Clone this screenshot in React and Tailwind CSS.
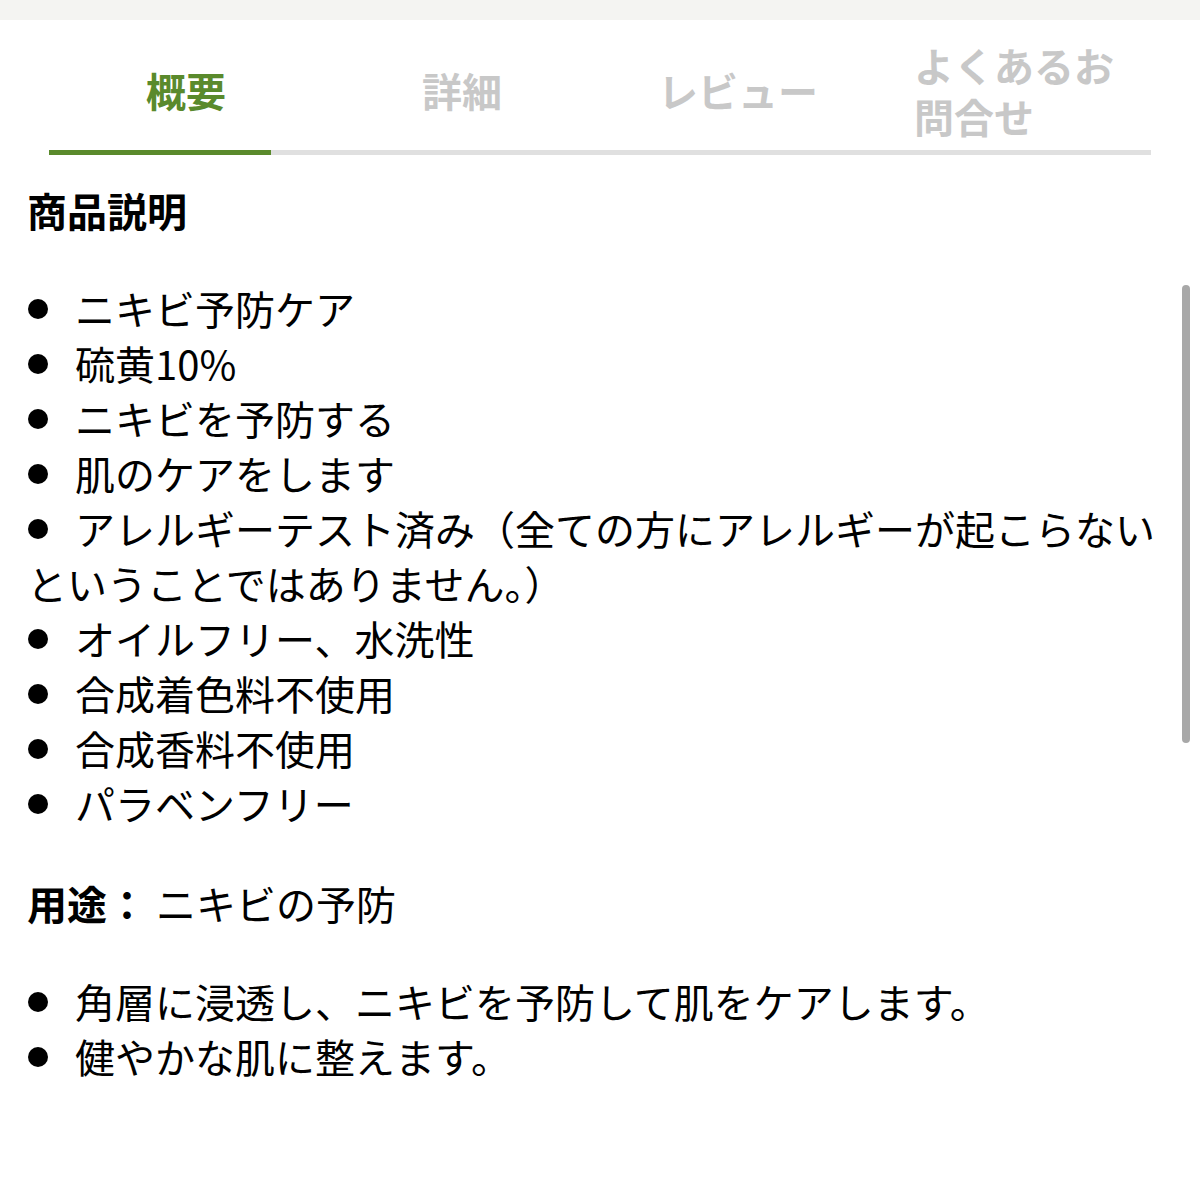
import React from "react";

const tabs = [
  { label: "概要", active: true },
  { label: "詳細" },
  { label: "レビュー" },
  { label: "よくあるお問合せ", wrap: true },
];

const features = [
  "ニキビ予防ケア",
  "硫黄10%",
  "ニキビを予防する",
  "肌のケアをします",
  "アレルギーテスト済み（全ての方にアレルギーが起こらないということではありません。）",
  "オイルフリー、水洗性",
  "合成着色料不使用",
  "合成香料不使用",
  "パラベンフリー",
];

const usage = ["角層に浸透し、ニキビを予防して肌をケアします。", "健やかな肌に整えます。"];

// Bullet + text, kept inline so long items wrap under the bullet
const Item = ({ children }) => (
  <p>
    <span className="inline-block w-[48px]">
      <span className="ml-[1px] inline-block h-[20px] w-[20px] rounded-full bg-black align-[6px]" />
    </span>
    {children}
  </p>
);

const App = () => {
  return (
    <div
      className="relative min-h-[1200px] w-full bg-white text-black"
      style={{ fontFamily: '"Noto Sans CJK JP", "Noto Sans", sans-serif' }}
    >
      {/* Top strip */}
      <div className="h-[20px] bg-[#f4f4f2]" />

      {/* Tabs */}
      <div className="mx-[48px] grid h-[130px] grid-cols-4 pt-[11px] text-[40px] font-bold leading-[51px]">
        {tabs.map((t) => (
          <div key={t.label} className="flex items-center justify-center">
            <span
              className={
                (t.active ? "text-[#5a8a2c]" : "text-[#c8c8c8]") +
                (t.wrap ? " w-[200px] text-left" : "")
              }
            >
              {t.label}
            </span>
          </div>
        ))}
      </div>
      <div className="ml-[49px] mr-[49px] flex h-[5px] bg-[#e0e0e0]">
        <div className="w-[222px] bg-[#5a8a2c]" />
      </div>

      {/* Content */}
      <div className="w-[1180px] pl-[27px] text-[40px] leading-[55px]">
        <h2 className="mt-[28px] font-bold">商品説明</h2>

        <div className="mt-[43px]">
          {features.map((f) => (
            <Item key={f}>{f}</Item>
          ))}
        </div>

        <p className="mt-[45px]">
          <span className="font-bold">用途：</span> ニキビの予防
        </p>

        <div className="mt-[43px]">
          {usage.map((u) => (
            <Item key={u}>{u}</Item>
          ))}
        </div>
      </div>

      {/* Scroll indicator */}
      <div className="absolute left-[1182px] top-[285px] h-[458px] w-[8px] rounded-full bg-[#a8a8a8]" />
    </div>
  );
};

export default App;
